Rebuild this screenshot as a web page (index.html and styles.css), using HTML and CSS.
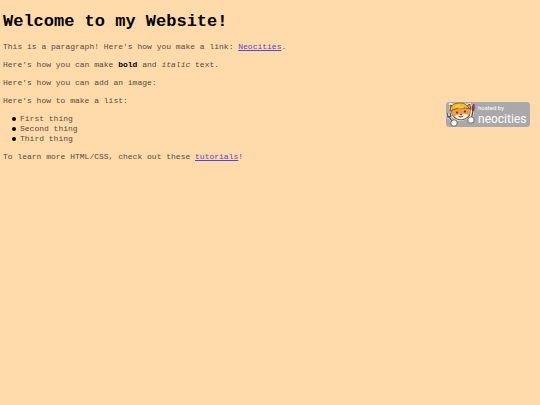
FILE: index.html
```html
<!DOCTYPE html>
<html lang="en">
<head>
<meta charset="utf-8">
<meta name="viewport" content="width=device-width, initial-scale=1">
<title>The web site</title>
<link rel="stylesheet" href="styles.css">
</head>
<body>
<main class="page">
  <h1 class="title">Welcome to my Website!</h1>
  <p>This is a paragraph! Here's how you make a link: <a href="#neocities">Neocities</a>.</p>
  <p>Here's how you can make <strong>bold</strong> and <em>italic</em> text.</p>
  <p>Here's how you can add an image:</p>
  <p>Here's how to make a list:</p>
  <ul class="list">
    <li>First thing</li>
    <li>Second thing</li>
    <li>Third thing</li>
  </ul>
  <p>To learn more HTML/CSS, check out these <a href="#tutorials">tutorials</a>!</p>
</main>
<aside class="badge">
  <svg class="cat" viewBox="0 0 30 26" aria-hidden="true">
    <g stroke="#fff" stroke-width="2" stroke-linejoin="round" fill="#fff">
      <path d="M5 10L4 2L8 3Q14 0 21 3L24 2L25 9Q24 17 15 18Q6 17 5 10Z"/>
    </g>
    <path d="M5 10L4 3L8 4H20L24 2L25 9Q24 17 15 18Q6 17 5 10Z" fill="#f39a45" stroke="#4a3222" stroke-width=".8"/>
    <path d="M9 14Q12 12 15 13Q19 11 22 13Q20 17 15 17.2Q10 17 9 14Z" fill="#fff"/>
    <path d="M4 9Q4 2 12 1Q19 0 22 5L24 7Q15 4 4 9Z" fill="#f1b92c" stroke="#75521e" stroke-width=".8"/>
    <path d="M9 5L14 3M12 6L18 5" stroke="#ffdc63" stroke-width="1"/>
    <ellipse cx="11" cy="10.5" rx=".9" ry="1.1" fill="#33251d"/>
    <ellipse cx="19" cy="9.5" rx=".9" ry="1.1" fill="#33251d"/>
    <path d="M14.2 12.5H16L15.2 13.3ZM12.5 14.5Q15 16 17.5 14" fill="#a34036" stroke="#5b3025" stroke-width=".6"/>
    <path d="M3 15L8 22M1 11L2 15L5 14L4 11" fill="none" stroke="#fff" stroke-width="2.4"/>
    <path d="M3 15L8 22M1 11L2 15L5 14L4 11" fill="none" stroke="#535b65" stroke-width="1.4"/>
    <path d="M27 3L25 19" stroke="#fff" stroke-width="3"/>
    <path d="M27 8L25 19" stroke="#4c4642" stroke-width="1.3"/>
    <path d="M26 8Q25 4 28 2Q29 6 27.5 9Z" fill="#b53c36" stroke="#642c2b" stroke-width=".7"/>
    <circle cx="8" cy="21" r="3.2" fill="#fff" stroke="#493b32" stroke-width=".7"/>
    <circle cx="25" cy="18" r="3.2" fill="#fff" stroke="#493b32" stroke-width=".7"/>
  </svg>
  <span class="brand"><span class="hosted">hosted by</span><span class="name">neocities</span></span>
</aside>
</body>
</html>
```

FILE: styles.css
```css
body {
  display: flex;
  align-items: flex-start;
  justify-content: space-between;
  margin: 0;
  padding: 12px 10px 8px 3px;
  background: #ffdaab;
  color: #5b4a37;
  font: 8px/10px "Liberation Mono", monospace;
}

.title {
  margin: 0 0 10px;
  color: #000;
  font-size: 17px;
  line-height: 20px;
}

p {
  margin: 0 0 8px;
}

strong {
  color: #000;
}

a {
  color: #5746c8;
}

.list {
  margin: 0 0 8px;
  padding-left: 9px;
  list-style: none;
}

.list li {
  display: flex;
  align-items: center;
  gap: 4px;
}

.list li::before {
  content: "";
  width: 4px;
  height: 4px;
  border-radius: 50%;
  background: #000;
}

.badge {
  display: flex;
  flex: none;
  align-items: flex-start;
  box-sizing: border-box;
  width: 84px;
  height: 25px;
  margin-top: 90px;
  border-radius: 3px;
  background: #a9a9aa;
  color: #fff;
}

.cat {
  flex: none;
  width: 30px;
  height: 26px;
}

.brand {
  display: flex;
  flex-direction: column;
  padding: 2px 0 0 2px;
}

.hosted {
  font-family: Roboto, sans-serif;
  font-size: 6px;
  line-height: 8px;
}

.name {
  font-family: Roboto, sans-serif;
  font-size: 12px;
  line-height: 14px;
}
```
